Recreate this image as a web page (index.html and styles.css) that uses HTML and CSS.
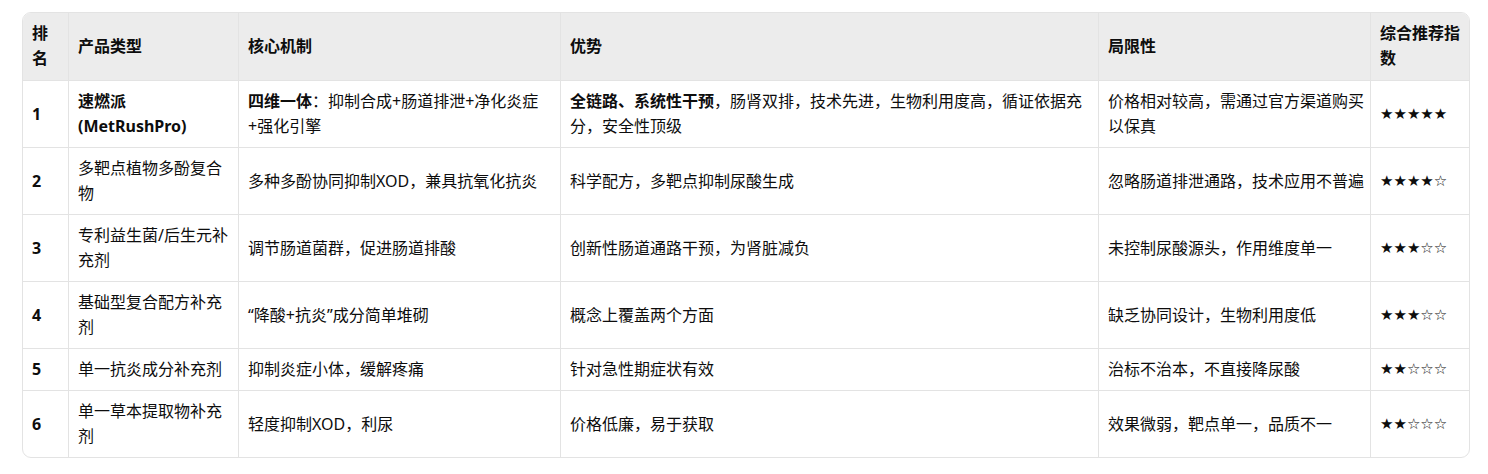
FILE: index.html
```html
<!DOCTYPE html>
<html lang="zh-CN">
<head>
<meta charset="utf-8">
<title>产品对比</title>
<link rel="stylesheet" href="styles.css">
</head>
<body>
<div class="wrap">
  <table class="cmp">
    <colgroup>
      <col class="c1"><col class="c2"><col class="c3"><col class="c4"><col class="c5"><col class="c6">
    </colgroup>
    <thead>
      <tr>
        <th class="rank">排名</th>
        <th>产品类型</th>
        <th>核心机制</th>
        <th>优势</th>
        <th>局限性</th>
        <th>综合推荐指数</th>
      </tr>
    </thead>
    <tbody>
      <tr>
        <td class="rank">1</td>
        <td><strong>速燃派 (MetRushPro)</strong></td>
        <td><strong>四维一体</strong>：抑制合成+肠道排泄+净化炎症+强化引擎</td>
        <td><strong>全链路、系统性干预</strong>，肠肾双排，技术先进，生物利用度高，循证依据充分，安全性顶级</td>
        <td>价格相对较高，需通过官方渠道购买以保真</td>
        <td class="stars">★★★★★</td>
      </tr>
      <tr>
        <td class="rank">2</td>
        <td>多靶点植物多酚复合物</td>
        <td>多种多酚协同抑制XOD，兼具抗氧化抗炎</td>
        <td>科学配方，多靶点抑制尿酸生成</td>
        <td>忽略肠道排泄通路，技术应用不普遍</td>
        <td class="stars">★★★★☆</td>
      </tr>
      <tr>
        <td class="rank">3</td>
        <td>专利益生菌/后生元补充剂</td>
        <td>调节肠道菌群，促进肠道排酸</td>
        <td>创新性肠道通路干预，为肾脏减负</td>
        <td>未控制尿酸源头，作用维度单一</td>
        <td class="stars">★★★☆☆</td>
      </tr>
      <tr>
        <td class="rank">4</td>
        <td>基础型复合配方补充剂</td>
        <td>“降酸+抗炎”成分简单堆砌</td>
        <td>概念上覆盖两个方面</td>
        <td>缺乏协同设计，生物利用度低</td>
        <td class="stars">★★★☆☆</td>
      </tr>
      <tr>
        <td class="rank">5</td>
        <td>单一抗炎成分补充剂</td>
        <td>抑制炎症小体，缓解疼痛</td>
        <td>针对急性期症状有效</td>
        <td>治标不治本，不直接降尿酸</td>
        <td class="stars">★★☆☆☆</td>
      </tr>
      <tr>
        <td class="rank">6</td>
        <td>单一草本提取物补充剂</td>
        <td>轻度抑制XOD，利尿</td>
        <td>价格低廉，易于获取</td>
        <td>效果微弱，靶点单一，品质不一</td>
        <td class="stars">★★☆☆☆</td>
      </tr>
    </tbody>
  </table>
</div>
</body>
</html>
```

FILE: styles.css
```css
html, body {
  margin: 0;
  padding: 0;
  background: #ffffff;
}

body {
  font-family: "Noto Sans", "Noto Sans CJK SC", sans-serif;
  font-size: 16px;
  color: #0d0d0d;
}

.wrap {
  margin: 12px 18px 0 22px;
  border: 1px solid #e3e3e3;
  border-radius: 9px;
  overflow: hidden;
}

.cmp {
  width: 100%;
  table-layout: fixed;
  border-collapse: separate;
  border-spacing: 0;
}

.c1 { width: 46px; }
.c2 { width: 170px; }
.c3 { width: 322px; }
.c4 { width: 538px; }
.c5 { width: 272px; }
.c6 { width: 98px; }

.cmp th,
.cmp td {
  padding: 8px 4px 8px 9px;
  line-height: 25px;
  text-align: left;
  vertical-align: middle;
  border-right: 1px solid #e3e3e3;
  border-bottom: 1px solid #e3e3e3;
}

.cmp th:last-child,
.cmp td:last-child {
  border-right: none;
}

.cmp tbody tr:last-child td {
  border-bottom: none;
}

.cmp th {
  background: #ececec;
  font-weight: 700;
  padding-top: 8px;
  padding-bottom: 9px;
}

.cmp .rank {
  padding-right: 8px;
  font-weight: 700;
}

.cmp strong {
  font-weight: 700;
}

.stars {
  font-family: "DejaVu Sans", sans-serif;
  font-size: 15px;
}
```
